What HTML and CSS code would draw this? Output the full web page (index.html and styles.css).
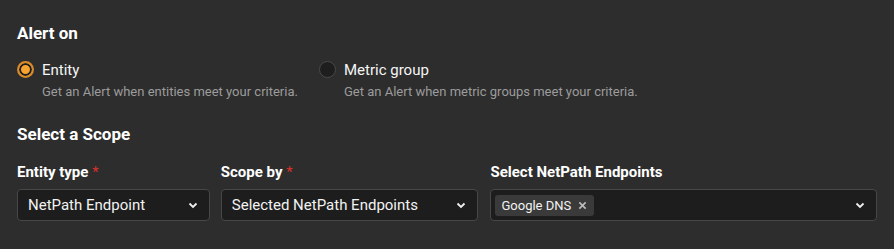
FILE: index.html
```html
<!DOCTYPE html>
<html lang="en">
<head>
    <meta charset="UTF-8">
    <title>Alert scope</title>
    <link rel="stylesheet" href="styles.css">
</head>
<body>
    <div class="panel">
        <h2 class="section-title">Alert on</h2>
        <div class="radio-row">
            <label class="radio-option">
                <span class="radio checked"></span>
                <span class="radio-text">
                    <span class="radio-label">Entity</span>
                    <span class="radio-help">Get an Alert when entities meet your criteria.</span>
                </span>
            </label>
            <label class="radio-option">
                <span class="radio"></span>
                <span class="radio-text">
                    <span class="radio-label">Metric group</span>
                    <span class="radio-help">Get an Alert when metric groups meet your criteria.</span>
                </span>
            </label>
        </div>

        <h2 class="section-title scope-title">Select a Scope</h2>
        <div class="fields">
            <div class="field field-type">
                <div class="field-label">Entity type <span class="req">*</span></div>
                <div class="select">
                    <span class="select-value">NetPath Endpoint</span>
                    <svg class="chevron" viewBox="0 0 12 12"><path d="M2.5 4.5 L6 8 L9.5 4.5" /></svg>
                </div>
            </div>
            <div class="field field-scope">
                <div class="field-label">Scope by <span class="req">*</span></div>
                <div class="select">
                    <span class="select-value">Selected NetPath Endpoints</span>
                    <svg class="chevron" viewBox="0 0 12 12"><path d="M2.5 4.5 L6 8 L9.5 4.5" /></svg>
                </div>
            </div>
            <div class="field field-endpoints">
                <div class="field-label">Select NetPath Endpoints</div>
                <div class="select multi">
                    <span class="chip">Google DNS
                        <svg class="chip-x" viewBox="0 0 10 10"><path d="M1.5 1.5 L8.5 8.5 M8.5 1.5 L1.5 8.5" /></svg>
                    </span>
                    <svg class="chevron" viewBox="0 0 12 12"><path d="M2.5 4.5 L6 8 L9.5 4.5" /></svg>
                </div>
            </div>
        </div>
    </div>
</body>
</html>
```

FILE: styles.css
```css
html, body {
    margin: 0;
    height: 100%;
}

body {
    background: #2d2d2d;
    font-family: Roboto, "Liberation Sans", sans-serif;
    color: #f2f2f2;
    overflow: hidden;
}

.panel {
    padding: 23px 17px 0 17px;
}

.section-title {
    margin: 0;
    font-size: 17px;
    font-weight: 700;
    line-height: 20px;
    color: #ffffff;
}

.scope-title {
    margin-top: 25px;
}

.radio-row {
    display: flex;
    margin-top: 18px;
}

.radio-option {
    display: flex;
    align-items: flex-start;
    gap: 8px;
    width: 302px;
    flex-shrink: 0;
    white-space: nowrap;
}

.radio {
    box-sizing: border-box;
    width: 17px;
    height: 17px;
    border-radius: 50%;
    border: 1px solid #4a4a4a;
    background: #1e1e1e;
    flex-shrink: 0;
}

.radio.checked {
    border: 2px solid #d68a2a;
    background: #f7a42e;
    box-shadow: inset 0 0 0 2px #1e1e1e;
}

.radio-text {
    display: flex;
    flex-direction: column;
}

.radio-label {
    font-size: 15px;
    line-height: 18px;
    color: #f5f5f5;
}

.radio-help {
    margin-top: 5px;
    font-size: 13px;
    line-height: 15px;
    color: #9c9c9c;
}

.fields {
    display: flex;
    gap: 11px;
    margin-top: 19px;
}

.field-type { width: 193px; }
.field-scope { width: 258px; }
.field-endpoints { width: 387px; margin-left: 1px; }

.field-label {
    font-size: 15px;
    font-weight: 700;
    line-height: 18px;
    color: #ffffff;
}

.req {
    color: #d9302c;
    font-weight: 400;
}

.select {
    box-sizing: border-box;
    margin-top: 8px;
    height: 32px;
    display: flex;
    align-items: center;
    justify-content: space-between;
    padding: 0 10px 0 10px;
    background: #1d1d1d;
    border: 1px solid #474747;
    border-radius: 4px;
}

.select.multi {
    padding-left: 4px;
}

.select-value {
    font-size: 15px;
    color: #f2f2f2;
}

.chevron {
    width: 12px;
    height: 12px;
    fill: none;
    stroke: #f0f0f0;
    stroke-width: 1.8;
}

.chip {
    display: inline-flex;
    align-items: center;
    gap: 7px;
    height: 21px;
    padding: 0 7px 0 6px;
    background: #3a3a3a;
    border-radius: 3px;
    font-size: 13px;
    color: #f2f2f2;
}

.chip-x {
    width: 9px;
    height: 9px;
    fill: none;
    stroke: #bdbdbd;
    stroke-width: 1.8;
}
```
